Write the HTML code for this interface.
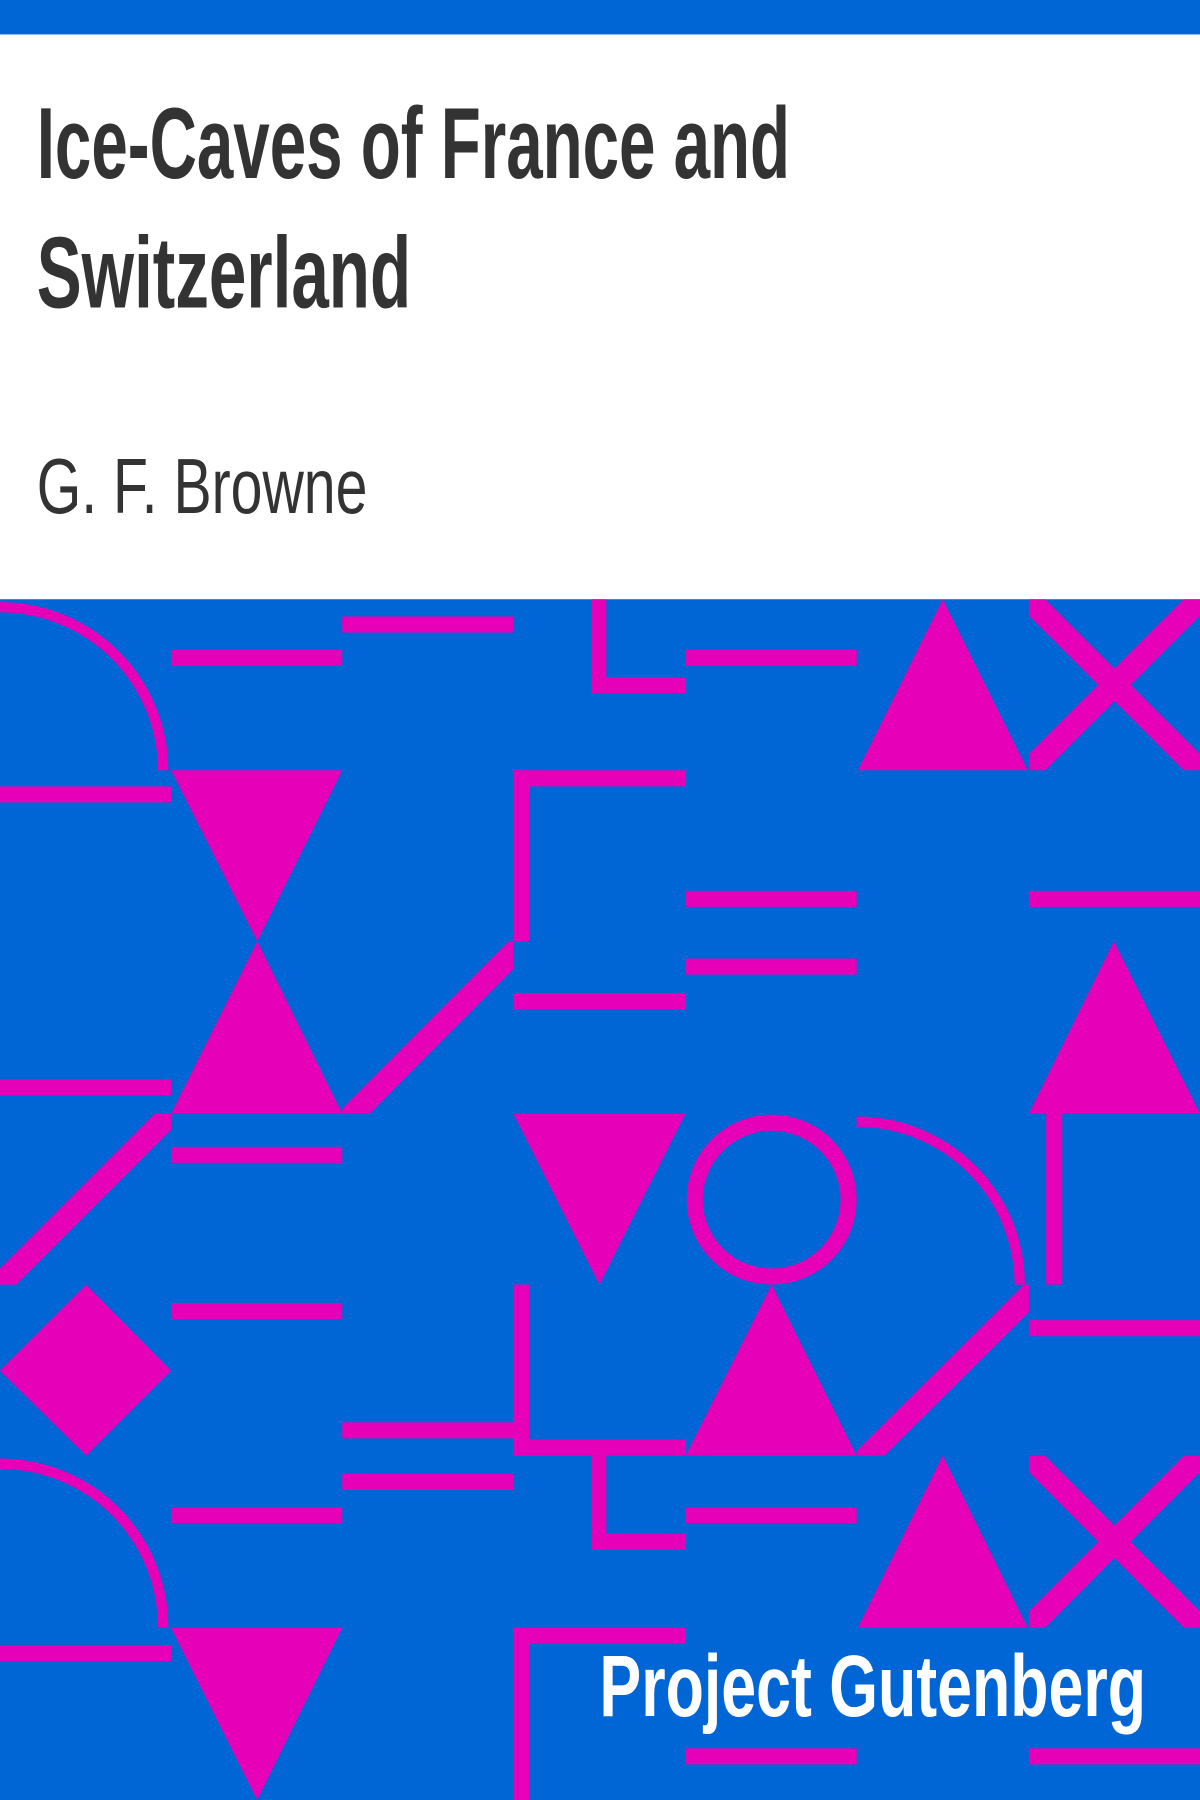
<!DOCTYPE html>
<html><head><meta charset="utf-8"><style>
html,body{margin:0;padding:0;background:#fff;}
svg{display:block;}
</style></head><body>
<svg width="1200" height="1800" viewBox="0 0 1045 1568" preserveAspectRatio="none" xmlns="http://www.w3.org/2000/svg">
<defs>
<clipPath id="c1"><rect x="896" y="522" width="149" height="149"/></clipPath>
<clipPath id="c2"><rect x="896" y="1268" width="149" height="150"/></clipPath>
<clipPath id="c3"><rect x="298" y="820" width="149" height="150"/></clipPath>
<clipPath id="c4"><rect x="0" y="970" width="149" height="149"/></clipPath>
<clipPath id="c5"><rect x="746" y="1119" width="150" height="149"/></clipPath>
</defs>
<rect x="0" y="0" width="1045" height="1568" fill="#fff"/>
<rect x="0" y="0" width="1045" height="30" fill="#0066d6"/>
<g font-family="'Liberation Sans Narrow','Liberation Sans',sans-serif" fill="#333">
<text x="32" y="155" font-size="88" font-weight="bold" textLength="656" lengthAdjust="spacingAndGlyphs">Ice-Caves of France and</text>
<text x="32" y="268" font-size="88" font-weight="bold" textLength="326" lengthAdjust="spacingAndGlyphs">Switzerland</text>
<text x="32" y="447" font-size="68" textLength="288" lengthAdjust="spacingAndGlyphs">G. F. Browne</text>
</g>
<rect x="0" y="522" width="1045" height="1046" fill="#0066d6"/>
<g fill="#e600b8">
<rect x="149" y="566" width="149" height="14"/>
<rect x="298" y="537" width="149" height="14"/>
<rect x="515" y="522" width="13" height="82"/>
<rect x="515" y="590" width="82" height="14"/>
<rect x="597" y="566" width="149" height="14"/>
<polygon points="821,522 895,671 747,671"/>
<rect x="0" y="685" width="149" height="14"/>
<polygon points="149,671 298,671 224,820"/>
<rect x="447" y="671" width="14" height="149"/>
<rect x="447" y="671" width="150" height="14"/>
<rect x="597" y="776" width="149" height="14"/>
<rect x="896" y="776" width="149" height="14"/>
<polygon points="224,820 298,970 149,970"/>
<rect x="0" y="940" width="149" height="14"/>
<rect x="447" y="865" width="150" height="14"/>
<rect x="597" y="835" width="149" height="14"/>
<polygon points="970,820 1045,970 896,970"/>
<rect x="149" y="999" width="149" height="14"/>
<polygon points="447,970 597,970 522,1119"/>
<rect x="911" y="970" width="14" height="149"/>
<polygon points="75,1119 149,1194 75,1268 0,1194"/>
<rect x="149" y="1135" width="149" height="14"/>
<rect x="447" y="1119" width="14" height="149"/>
<rect x="447" y="1254" width="150" height="14"/>
<polygon points="672,1119 746,1268 597,1268"/>
<rect x="896" y="1150" width="149" height="14"/>
<rect x="149" y="1313" width="149" height="14"/>
<rect x="298" y="1239" width="149" height="14"/>
<rect x="298" y="1284" width="149" height="14"/>
<rect x="515" y="1268" width="13" height="82"/>
<rect x="515" y="1336" width="82" height="14"/>
<rect x="597" y="1313" width="149" height="14"/>
<polygon points="821,1268 895,1418 747,1418"/>
<rect x="0" y="1433" width="149" height="14"/>
<polygon points="149,1418 298,1418 224,1568"/>
<rect x="447" y="1418" width="14" height="150"/>
<rect x="447" y="1418" width="150" height="14"/>
<rect x="597" y="1523" width="149" height="14"/>
<rect x="896" y="1523" width="149" height="14"/>
</g>
<g stroke="#e600b8" fill="none">
<path d="M0,529 A142,142 0 0 1 142,671" stroke-width="9"/>
<path d="M0,1275 A142,142 0 0 1 142,1418" stroke-width="9"/>
<path d="M746,977 A142,142 0 0 1 888,1119" stroke-width="9"/>
<circle cx="672" cy="1045" r="67" stroke-width="14"/>
<g stroke-width="20">
<g clip-path="url(#c1)"><line x1="886" y1="512" x2="1055" y2="681"/><line x1="886" y1="681" x2="1055" y2="512"/></g>
<g clip-path="url(#c2)"><line x1="886" y1="1258" x2="1055" y2="1428"/><line x1="886" y1="1428" x2="1055" y2="1258"/></g>
<g clip-path="url(#c3)"><line x1="298" y1="980" x2="457" y2="820"/></g>
<g clip-path="url(#c4)"><line x1="-5" y1="1124" x2="159" y2="960"/></g>
<g clip-path="url(#c5)"><line x1="746" y1="1278" x2="906" y2="1119"/></g>
</g>
</g>
<text x="522" y="1495" font-family="'Liberation Sans Narrow','Liberation Sans',sans-serif" font-weight="bold" font-size="76" fill="#fff" textLength="476" lengthAdjust="spacingAndGlyphs">Project Gutenberg</text>
</svg>
</body></html>
